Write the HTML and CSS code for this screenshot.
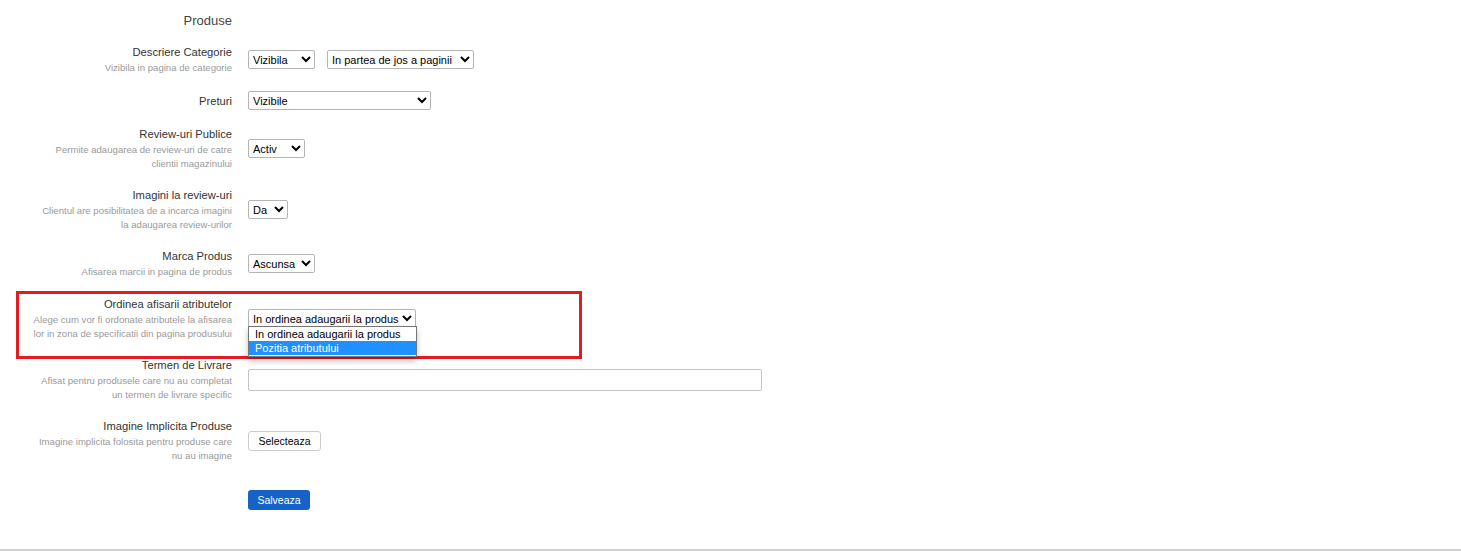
FILE: index.html
```html
<!DOCTYPE html>
<html lang="ro">
<head>
    <meta charset="UTF-8">
    <meta name="viewport" content="width=device-width, initial-scale=1.0">
    <title>Setari Produse</title>
    <link rel="stylesheet" href="styles.css">
</head>
<body>
    <div class="page">
        <form class="settings" action="#" method="post">
            <h2 class="settings-title">Produse</h2>

            <div class="setting-row">
                <div class="setting-label">
                    <label>Descriere Categorie</label>
                    <p>Vizibila in pagina de categorie</p>
                </div>
                <div class="setting-control">
                    <select class="w-67">
                        <option>Vizibila</option>
                        <option>Ascunsa</option>
                    </select>
                    <select class="w-147">
                        <option>In partea de jos a paginii</option>
                        <option>In partea de sus a paginii</option>
                    </select>
                </div>
            </div>

            <div class="setting-row">
                <div class="setting-label">
                    <label>Preturi</label>
                </div>
                <div class="setting-control">
                    <select class="w-183">
                        <option>Vizibile</option>
                        <option>Ascunse</option>
                    </select>
                </div>
            </div>

            <div class="setting-row">
                <div class="setting-label">
                    <label>Review-uri Publice</label>
                    <p>Permite adaugarea de review-uri de catre<br>clientii magazinului</p>
                </div>
                <div class="setting-control">
                    <select class="w-57">
                        <option>Activ</option>
                        <option>Inactiv</option>
                    </select>
                </div>
            </div>

            <div class="setting-row">
                <div class="setting-label">
                    <label>Imagini la review-uri</label>
                    <p>Clientul are posibilitatea de a incarca imagini<br>la adaugarea review-urilor</p>
                </div>
                <div class="setting-control">
                    <select class="w-40">
                        <option>Da</option>
                        <option>Nu</option>
                    </select>
                </div>
            </div>

            <div class="setting-row spaced">
                <div class="setting-label">
                    <label>Marca Produs</label>
                    <p>Afisarea marcii in pagina de produs</p>
                </div>
                <div class="setting-control">
                    <select class="w-67">
                        <option>Ascunsa</option>
                        <option>Vizibila</option>
                    </select>
                </div>
            </div>

            <div class="setting-row highlighted">
                <span class="highlight-box"></span>
                <div class="setting-label">
                    <label>Ordinea afisarii atributelor</label>
                    <p>Alege cum vor fi ordonate atributele la afisarea<br>lor in zona de specificatii din pagina produsului</p>
                </div>
                <div class="setting-control">
                    <div class="dropdown">
                        <select class="w-168">
                            <option>In ordinea adaugarii la produs</option>
                            <option>Pozitia atributului</option>
                        </select>
                        <ul class="dropdown-list">
                            <li>In ordinea adaugarii la produs</li>
                            <li class="active">Pozitia atributului</li>
                        </ul>
                    </div>
                </div>
            </div>

            <div class="setting-row">
                <div class="setting-label">
                    <label>Termen de Livrare</label>
                    <p>Afisat pentru produsele care nu au completat<br>un termen de livrare specific</p>
                </div>
                <div class="setting-control">
                    <input type="text" class="text-input">
                </div>
            </div>

            <div class="setting-row">
                <div class="setting-label">
                    <label>Imagine Implicita Produse</label>
                    <p>Imagine implicita folosita pentru produse care<br>nu au imagine</p>
                </div>
                <div class="setting-control">
                    <button type="button" class="btn btn-default">Selecteaza</button>
                </div>
            </div>

            <div class="setting-row actions">
                <div class="setting-label"></div>
                <div class="setting-control">
                    <button type="submit" class="btn btn-primary">Salveaza</button>
                </div>
            </div>
        </form>
        <div class="footer-line"></div>
    </div>
</body>
</html>
```

FILE: styles.css
```css
:root {
    --text-primary: #333333;
    --text-muted: #9a9a9a;
    --border-color: #c4c4c4;
    --primary-color: #1762c6;
    --highlight-color: #e31b23;
    --option-active: #1e90ff;
}

* {
    margin: 0;
    padding: 0;
    box-sizing: border-box;
}

body {
    font-family: 'Liberation Sans', Arial, sans-serif;
    font-size: 11.2px;
    color: var(--text-primary);
    background: #ffffff;
}

.page {
    height: 551px;
    display: flex;
    flex-direction: column;
}

.settings {
    flex: 1;
    padding-top: 13px;
}

.settings-title {
    width: 232px;
    text-align: right;
    font-size: 13px;
    font-weight: normal;
    color: #444444;
    line-height: 16px;
    margin-bottom: 15px;
}

.setting-row {
    display: grid;
    grid-template-columns: 232px 1fr;
    column-gap: 16px;
    align-items: center;
    margin-bottom: 16px;
}

.setting-row.spaced {
    margin-bottom: 17px;
}

.setting-label {
    text-align: right;
}

.setting-label label {
    display: block;
    font-size: 11.2px;
    line-height: 16px;
    color: var(--text-primary);
}

.setting-label p {
    margin-top: 1px;
    font-size: 9.6px;
    line-height: 14px;
    color: var(--text-muted);
}

.setting-control {
    display: flex;
    align-items: center;
    gap: 12px;
}

select {
    height: 19px;
    font-family: 'Liberation Sans', Arial, sans-serif;
    font-size: 11px;
    color: #000000;
    border: 1px solid #b5b5b5;
    border-radius: 2px;
    background: #ffffff;
    padding: 0;
}

.w-40 { width: 40px; }
.w-57 { width: 57px; }
.w-67 { width: 67px; }
.w-147 { width: 147px; }
.w-168 { width: 168px; }
.w-183 { width: 183px; }

/* evidentiere pentru setarea noua */
.highlighted {
    position: relative;
}

.highlight-box {
    position: absolute;
    left: 16px;
    top: -5px;
    width: 566px;
    height: 68px;
    border: 3px solid var(--highlight-color);
    pointer-events: none;
}

.dropdown {
    position: relative;
}

.dropdown-list {
    position: absolute;
    left: 0;
    top: 17px;
    width: 169px;
    list-style: none;
    background: #ffffff;
    border: 1px solid #767676;
    box-shadow: 0 4px 6px rgba(0, 0, 0, 0.25);
    padding-bottom: 1px;
    z-index: 2;
}

.dropdown-list li {
    font-size: 11px;
    line-height: 14px;
    padding: 0 6px;
    white-space: nowrap;
    color: #000000;
}

.dropdown-list li.active {
    background: var(--option-active);
    color: #ffffff;
}

.text-input {
    width: 514px;
    height: 22px;
    border: 1px solid var(--border-color);
    border-radius: 2px;
}

.btn {
    height: 20px;
    font-family: 'Liberation Sans', Arial, sans-serif;
    font-size: 10.5px;
    border-radius: 3px;
    cursor: pointer;
}

.btn-default {
    width: 73px;
    background: #ffffff;
    color: #000000;
    border: 1px solid #cccccc;
}

.btn-primary {
    width: 62px;
    background: var(--primary-color);
    color: #ffffff;
    border: none;
}

.actions {
    margin-top: 27px;
}

.footer-line {
    height: 2px;
    background: #d0d0d0;
}
```
